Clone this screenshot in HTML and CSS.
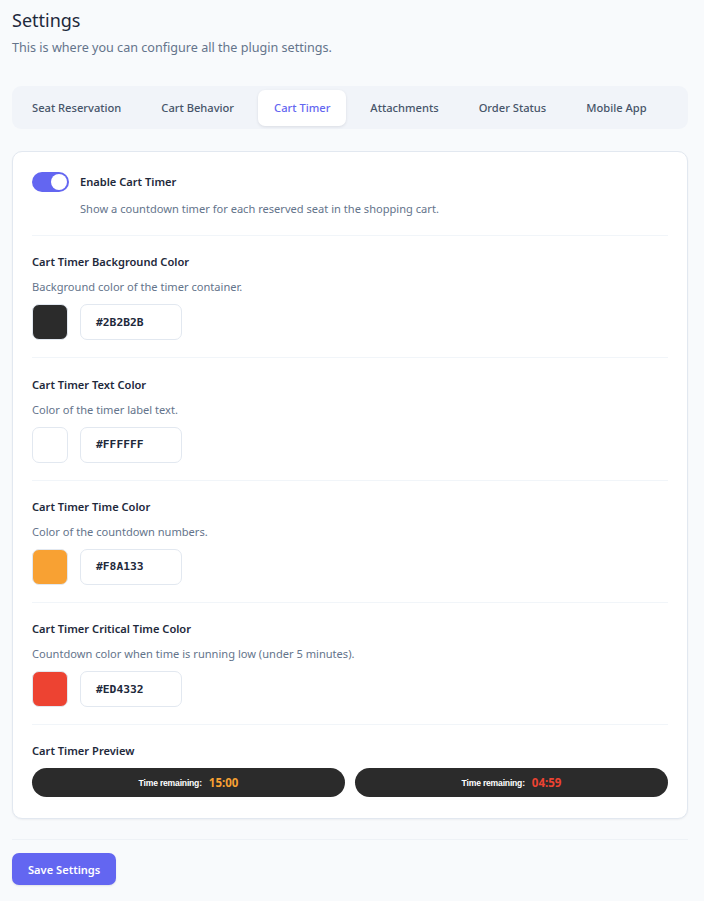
FILE: index.html
```html
<!DOCTYPE html>
<html>
<head>
<meta charset="utf-8">
<link rel="stylesheet" href="styles.css">
</head>
<body>
<div class="page">
  <h1 class="title">Settings</h1>
  <p class="subtitle">This is where you can configure all the plugin settings.</p>

  <nav class="tabs">
    <span class="tab">Seat Reservation</span>
    <span class="tab">Cart Behavior</span>
    <span class="tab active">Cart Timer</span>
    <span class="tab">Attachments</span>
    <span class="tab">Order Status</span>
    <span class="tab">Mobile App</span>
  </nav>

  <section class="card">
    <div class="row">
      <div class="toggle-line">
        <span class="toggle"><span class="knob"></span></span>
        <span class="label">Enable Cart Timer</span>
      </div>
      <p class="desc indent">Show a countdown timer for each reserved seat in the shopping cart.</p>
    </div>

    <div class="row">
      <div class="label">Cart Timer Background Color</div>
      <p class="desc">Background color of the timer container.</p>
      <div class="color-line">
        <span class="swatch swatch-dark"></span>
        <span class="hex">#2B2B2B</span>
      </div>
    </div>

    <div class="row">
      <div class="label">Cart Timer Text Color</div>
      <p class="desc">Color of the timer label text.</p>
      <div class="color-line">
        <span class="swatch swatch-white"></span>
        <span class="hex">#FFFFFF</span>
      </div>
    </div>

    <div class="row">
      <div class="label">Cart Timer Time Color</div>
      <p class="desc">Color of the countdown numbers.</p>
      <div class="color-line">
        <span class="swatch swatch-orange"></span>
        <span class="hex">#F8A133</span>
      </div>
    </div>

    <div class="row">
      <div class="label">Cart Timer Critical Time Color</div>
      <p class="desc">Countdown color when time is running low (under 5 minutes).</p>
      <div class="color-line">
        <span class="swatch swatch-red"></span>
        <span class="hex">#ED4332</span>
      </div>
    </div>

    <div class="row last">
      <div class="label">Cart Timer Preview</div>
      <div class="previews">
        <div class="timer"><span class="timer-label">Time remaining:</span><span class="timer-time normal">15:00</span></div>
        <div class="timer"><span class="timer-label">Time remaining:</span><span class="timer-time critical">04:59</span></div>
      </div>
    </div>
  </section>

  <div class="footer">
    <button class="save">Save Settings</button>
  </div>
</div>
</body>
</html>
```
FILE: styles.css
```css
* { box-sizing: border-box; }
html, body { margin: 0; padding: 0; }
body {
  background: #f8fafc;
  font-family: "Noto Sans", "Open Sans", sans-serif;
  color: #1e293b;
}
.page {
  padding: 8px 16px 16px 12px;
}
.title {
  margin: 0;
  font-size: 18px;
  font-weight: 400;
  line-height: 24px;
  color: #1e293b;
}
.subtitle {
  margin: 7px 0 0;
  font-size: 12.6px;
  line-height: 18px;
  color: #64748b;
}
.tabs {
  margin-top: 29px;
  display: flex;
  align-items: flex-start;
  gap: 8px;
  background: #f1f4f9;
  border-radius: 9px;
  padding: 4px 4px 3px;
  height: 43px;
}
.tab {
  padding: 0 16px;
  height: 36px;
  line-height: 36px;
  font-size: 11.15px;
  font-weight: 500;
  color: #475569;
  border-radius: 7px;
  flex: 0 0 auto;
}
.tab.active {
  background: #fff;
  color: #6366f1;
  box-shadow: 0 1px 3px rgba(15, 23, 42, 0.1);
}
.card {
  margin-top: 22px;
  background: #fff;
  border: 1px solid #e2e8f0;
  border-radius: 10px;
  padding: 20px 19px 21px;
  box-shadow: 0 1px 2px rgba(15, 23, 42, 0.05);
}
.row {
  padding-bottom: 17px;
  border-bottom: 1px solid #f1f5f9;
  margin-bottom: 17.25px;
}
.row.last {
  border-bottom: none;
  margin-bottom: 0;
  padding-bottom: 0;
}
.toggle-line {
  display: flex;
  align-items: center;
  gap: 11px;
}
.toggle {
  width: 37px;
  height: 20px;
  border-radius: 10px;
  background: #6366f1;
  display: flex;
  align-items: center;
  justify-content: flex-end;
  padding: 2px;
}
.knob {
  width: 16px;
  height: 16px;
  border-radius: 50%;
  background: #fff;
}
.label {
  font-size: 11.1px;
  font-weight: 600;
  color: #1e293b;
  line-height: 18px;
}
.desc {
  margin: 7px 0 0;
  font-size: 11.1px;
  line-height: 18px;
  color: #64748b;
}
.desc.indent {
  margin-left: 48px;
  margin-top: 8px;
}
.color-line {
  margin-top: 8px;
  display: flex;
  gap: 12px;
}
.swatch {
  width: 36px;
  height: 36px;
  border-radius: 7px;
  border: 1px solid #e2e8f0;
}
.swatch-dark { background: #2b2b2b; }
.swatch-white { background: #ffffff; }
.swatch-orange { background: #f8a133; }
.swatch-red { background: #ed4332; }
.hex {
  width: 102px;
  height: 36px;
  border: 1px solid #e2e8f0;
  border-radius: 7px;
  padding: 0 15px;
  display: flex;
  align-items: center;
  font-family: "DejaVu Sans Mono", monospace;
  font-size: 11.3px;
  font-weight: 600;
  color: #1e293b;
}
.previews {
  margin-top: 8px;
  display: flex;
  gap: 10px;
}
.timer {
  flex: 1;
  height: 29px;
  border-radius: 15px;
  background: #2b2b2b;
  display: flex;
  align-items: center;
  justify-content: center;
  gap: 7px;
}
.timer-label {
  font-family: "Liberation Sans", Arial, sans-serif;
  font-size: 8.6px;
  font-weight: 700;
  color: #fff;
  letter-spacing: -0.2px;
}
.timer-time {
  font-family: "Noto Sans", sans-serif;
  font-size: 11.5px;
  font-weight: 700;
}
.timer-time.normal { color: #f8a133; }
.timer-time.critical { color: #ed4332; }
.footer {
  margin-top: 20px;
  border-top: 1px solid #eef2f6;
  padding-top: 13px;
}
.save {
  background: #6366f1;
  color: #fff;
  border: none;
  border-radius: 7px;
  height: 32px;
  padding: 0 16px;
  font-family: "Noto Sans", sans-serif;
  font-size: 11.1px;
  font-weight: 600;
  box-shadow: 0 1px 2px rgba(15, 23, 42, 0.1);
}
```
